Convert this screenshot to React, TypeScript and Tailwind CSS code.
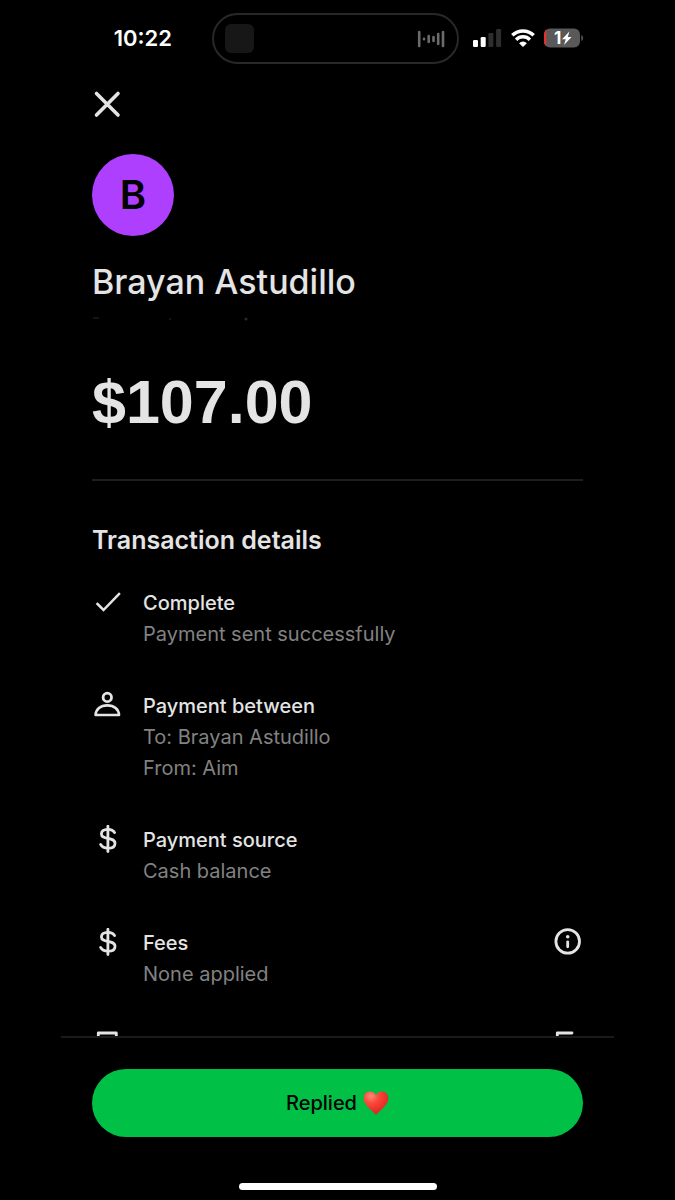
import type { ReactNode } from "react";

type IconProps = { children: ReactNode };

function LineIcon({ children }: IconProps) {
  return (
    <svg
      viewBox="0 1 31 31"
      fill="none"
      stroke="currentColor"
      strokeWidth="2.8"
      strokeLinecap="round"
      strokeLinejoin="round"
      className="size-[31px] shrink-0"
      aria-hidden="true"
    >
      {children}
    </svg>
  );
}

const CheckIcon = () => (
  <LineIcon>
    <path d="M5.5 17 L11.5 23 L27 7" strokeLinejoin="miter" strokeLinecap="square" strokeWidth="2.5" />
  </LineIcon>
);

const PersonIcon = () => (
  <LineIcon>
    <circle cx="15.3" cy="7.4" r="4.2" />
    <path d="M3.6 25 C3.9 19.4 8.4 15.4 15.3 15.4 C22.2 15.4 26.7 19.4 27 25 Z" strokeWidth="2.6" />
  </LineIcon>
);

const DollarIcon = () => (
  <LineIcon>
    <path d="M15.9 2.2 V27.6" />
    <path d="M22.6 8.6 C21.4 6.4 19 5.3 16 5.3 C12.1 5.3 9.4 7 9.4 9.9 C9.4 16.2 23 12.4 23 19.4 C23 22.6 20.2 24.2 16.2 24.2 C12.6 24.2 9.9 23 8.6 20.4" />
  </LineIcon>
);

const ReceiptIcon = () => (
  <LineIcon>
    <path d="M6.3 28 V3 H24.3 V28 Z" />
  </LineIcon>
);

const CopyIcon = () => (
  <LineIcon>
    <path d="M5.3 20 V3 H20" />
  </LineIcon>
);

const InfoIcon = () => (
  <LineIcon>
    <circle cx="15.7" cy="14.4" r="11.8" />
    <path d="M15.7 14.8 V19.8" strokeWidth="2.8" />
    <circle cx="15.7" cy="9.7" r="1.8" fill="currentColor" stroke="none" />
  </LineIcon>
);

const HeartIcon = () => (
  <svg viewBox="0 0 26 26" className="size-[26px]" aria-hidden="true">
    <defs>
      <radialGradient id="heart" cx="0.3" cy="0.2" r="0.85">
        <stop offset="0" stopColor="#ff8a76" />
        <stop offset="0.35" stopColor="#fb4a3c" />
        <stop offset="1" stopColor="#dc1d1c" />
      </radialGradient>
    </defs>
    <path
      d="M13 25 C10.5 21.5 0.7 15.5 0.7 8.2 C0.7 4 3.6 1.4 7 1.4 C9.8 1.4 12 3 13 5.4 C14 3 16.2 1.4 19 1.4 C22.4 1.4 25.3 4 25.3 8.2 C25.3 15.5 15.5 21.5 13 25 Z"
      fill="url(#heart)"
    />
  </svg>
);

const rows = [
  { icon: <CheckIcon />, title: "Complete", lines: ["Payment sent successfully"] },
  { icon: <PersonIcon />, title: "Payment between", lines: ["To: Brayan Astudillo", "From: Aim"] },
  { icon: <DollarIcon />, title: "Payment source", lines: ["Cash balance"] },
  { icon: <DollarIcon />, title: "Fees", lines: ["None applied"], action: <InfoIcon />, actionLabel: "About fees" },
  { icon: <ReceiptIcon />, title: "", lines: [], action: <CopyIcon />, actionLabel: "Copy" },
];

function StatusBar() {
  return (
    <div className="grid grid-cols-[1fr_247px_1fr] items-center pt-[13px] pr-1 text-white">
      <span className="pr-10 pb-[2px] text-right text-[22px] leading-6 font-semibold">10:22</span>

      <div className="flex h-[51px] items-center justify-between rounded-full border-2 border-[#282828] pr-3 pl-[11px]">
        <div className="size-[29px] rounded-md bg-[#171717]" />
        <svg viewBox="0 0 28 18" className="h-[18px] w-7" stroke="#6b6b6b" strokeWidth="2.6" strokeLinecap="round" aria-hidden="true">
          <path d="M2.2 2 V16 M7 8.8 V9.2 M11.7 6 V12 M16.5 7 V11 M21.2 4 V14 M26 2 V16" />
        </svg>
      </div>

      <div className="flex items-center gap-[9px] pb-[2px] pl-[14px]">
        <svg viewBox="0 0 29 18" className="h-[18px] w-[29px]" aria-hidden="true">
          <rect x="0" y="11" width="5" height="7" rx="1.3" fill="#fff" />
          <rect x="7.7" y="8" width="5" height="10" rx="1.3" fill="#fff" />
          <rect x="15.4" y="4" width="5" height="14" rx="1.3" fill="#2e2e2e" />
          <rect x="23.1" y="0" width="5" height="18" rx="1.3" fill="#2e2e2e" />
        </svg>
        <svg viewBox="0 0 24 18" className="h-[18px] w-6" fill="none" stroke="#fff" strokeWidth="3.5" aria-hidden="true">
          <path d="M1.3 6.3 A15.5 15.5 0 0 1 22.7 6.3" />
          <path d="M5.1 10.7 A9.8 9.8 0 0 1 18.9 10.7" />
          <path d="M12 18 L8.1 14.2 A5.4 5.4 0 0 1 15.9 14.2 Z" fill="#fff" stroke="none" />
        </svg>
        <svg viewBox="0 0 40 20" className="h-5 w-10" aria-hidden="true">
          <clipPath id="battery">
            <rect x="0" y="0.5" width="36" height="19" rx="6" />
          </clipPath>
          <g clipPath="url(#battery)">
            <rect width="36" height="20" fill="#595959" />
            <rect width="2.4" height="20" fill="#e0332f" />
          </g>
          <path d="M37.3 7 C39.7 8 39.7 12 37.3 13 Z" fill="#595959" />
          <text x="10" y="16" fontSize="17" fontWeight="700" fill="#fff">1</text>
          <path d="M25.4 3.6 L18 11.3 H21.8 L20 17 L27.6 9 H23.8 Z" fill="#fff" />
        </svg>
      </div>
    </div>
  );
}

export default function App() {
  return (
    <div className="flex h-screen flex-col bg-black font-['Inter',sans-serif] text-[#e4e4e4]">
      <StatusBar />

      <main className="min-h-0 flex-1 overflow-hidden px-[92px] pt-[25px]">
        <button type="button" aria-label="Close" className="block">
          <LineIcon>
            <path d="M4.5 5.5 L26 27 M26 5.5 L4.5 27" strokeWidth="3.6" />
          </LineIcon>
        </button>

        <div className="mt-[34px] flex size-[82px] items-center justify-center rounded-full bg-[#ae3fff] text-[40px] font-semibold text-black">
          B
        </div>

        <h1 className="mt-6 text-[34px] leading-[44px] font-medium">Brayan Astudillo</h1>
        <svg className="mt-[13px] h-1 w-40" aria-hidden="true">
          <path d="M1 1 H7 M77 2 H79" stroke="#141414" strokeWidth="2" />
          <circle cx="154" cy="2" r="1.5" fill="#2b2b2b" />
        </svg>

        <p className="mt-[46px] border-b-2 border-[#1e1e1e] pb-[42px] font-['Liberation_Sans',sans-serif] text-[61px] leading-[70px] font-bold">
          $107.00
        </p>

        <h2 className="mt-[43px] text-[25px] leading-8 font-semibold">Transaction details</h2>

        <ul className="mt-8 flex flex-col gap-[41px]">
          {rows.map((row, i) => (
            <li key={i} className="flex items-start gap-5">
              {row.icon}
              <div className="flex-1 text-xl leading-[31px]">
                <h3 className="font-medium">{row.title}</h3>
                {row.lines.map((line) => (
                  <p key={line} className="text-[#828282]">{line}</p>
                ))}
              </div>
              {row.action && (
                <button type="button" aria-label={row.actionLabel}>{row.action}</button>
              )}
            </li>
          ))}
        </ul>
      </main>

      <footer className="mx-[61px] border-t-2 border-[#1a1a1a] px-[31px] pt-[31px]">
        <button
          type="button"
          className="flex h-[68px] w-full items-center justify-center gap-[6px] rounded-full bg-[#00c046] text-xl font-medium text-black"
        >
          Replied
          <HeartIcon />
        </button>
        <div className="mx-auto mt-[46px] mb-[10px] h-[7px] w-[198px] rounded-full bg-white" />
      </footer>
    </div>
  );
}
